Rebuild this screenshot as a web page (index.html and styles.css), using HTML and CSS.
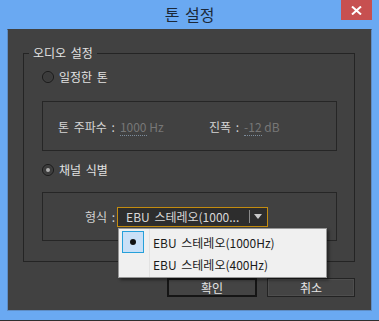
FILE: index.html
```html
<html>

<head>
    <meta charset="utf-8">
    <link rel="stylesheet" href="styles.css">
</head>

<body>
    <div class="window">
        <div class="titlebar">
            <span class="title">톤 설정</span>
            <div class="close">
                <svg width="11" height="9" viewBox="0 0 11 9">
                    <path d="M1 0.5 L10 8.5 M10 0.5 L1 8.5" stroke="#fff" stroke-width="2" fill="none" />
                </svg>
            </div>
        </div>
        <div class="client">
            <div class="group">
                <span class="legend">오디오 설정</span>
                <div class="radio-row"><span class="radio"></span>일정한 톤</div>
                <div class="subbox">
                    <div class="field field-freq">
                        <span class="label">톤 주파수 :</span>
                        <span class="value"><span class="num">1000</span> Hz</span>
                    </div>
                    <div class="field">
                        <span class="label">진폭 :</span>
                        <span class="value"><span class="num">-12</span> dB</span>
                    </div>
                </div>
                <div class="radio-row"><span class="radio checked"></span>채널 식별</div>
                <div class="subbox format">
                    <span class="label">형식 :</span>
                    <div class="dropdown">
                        <span class="dd-text">EBU 스테레오(1000...</span>
                        <span class="dd-sep"></span>
                        <span class="dd-arrow"></span>
                    </div>
                </div>
            </div>
            <div class="buttons">
                <div class="btn default">확인</div>
                <div class="btn">취소</div>
            </div>
            <div class="popup">
                <div class="menu-item">
                    <span class="check"><span class="bullet"></span></span>
                    <span class="item-text">EBU 스테레오(1000Hz)</span>
                </div>
                <div class="menu-item">
                    <span class="check empty"></span>
                    <span class="item-text">EBU 스테레오(400Hz)</span>
                </div>
            </div>
        </div>
    </div>
</body>

</html>
```

FILE: styles.css
```css
body {
    margin: 0;
    background: #2f2f2f;
    font-family: "Noto Sans CJK KR", "Noto Sans", sans-serif;
    font-size: 12px;
    word-spacing: 2px;
}

.window {
    width: 379px;
    height: 320px;
    background: #6aa9f2;
    position: relative;
}

.titlebar {
    height: 29px;
    display: flex;
    justify-content: center;
    align-items: center;
}

.title {
    font-size: 16px;
    color: #1b2838;
    margin-top: -1px;
}

.close {
    position: absolute;
    top: 0;
    left: 341px;
    width: 31px;
    height: 20px;
    background: #c75050;
    display: flex;
    align-items: center;
    justify-content: center;
}

.client {
    margin: 0 7px;
    height: 282px;
    background: #414141;
    border: 1px solid #5e8cc4;
    border-top: 1px solid #414141;
    padding: 23px 0 0 15px;
    box-sizing: border-box;
    position: relative;
    color: #dcdcdc;
}

.group {
    width: 332px;
    height: 209px;
    border: 1px solid #242424;
    box-sizing: border-box;
    position: relative;
    padding: 15px 0 0 18px;
}

.legend {
    position: absolute;
    top: -9px;
    left: 5px;
    padding: 0 4px;
    background: #414141;
    line-height: 16px;
    color: #e2e2e2;
}

.radio-row {
    display: flex;
    align-items: center;
    height: 16px;
    line-height: 16px;
    color: #e2e2e2;
}

.radio {
    width: 12px;
    height: 12px;
    border: 1px solid #1a1a1a;
    border-radius: 50%;
    box-sizing: border-box;
    background: #3c3c3c;
    box-shadow: inset 0 0 1px #5a5a5a;
    margin-right: 5px;
    display: flex;
    align-items: center;
    justify-content: center;
}

.radio.checked::after {
    content: "";
    width: 4px;
    height: 4px;
    border-radius: 50%;
    background: #b0b0b0;
}

.subbox {
    width: 295px;
    height: 50px;
    border: 1px solid #262626;
    box-sizing: border-box;
    display: flex;
    align-items: center;
    padding-left: 15px;
    margin: 16px 0 11px 0;
}

.subbox.format {
    height: 49px;
    margin: 14px 0 0 0;
    padding-left: 42px;
}

.field {
    display: flex;
    align-items: center;
}

.field-freq {
    width: 151px;
}

.label {
    color: #d4d4d4;
    margin-right: 5px;
}

.format .label {
    margin-right: 2px;
}

.value {
    color: #777;
    word-spacing: 0;
}

.num {
    border-bottom: 1px dotted #7c8c9c;
}

.dropdown {
    width: 151px;
    height: 20px;
    border: 1px solid #c38c10;
    box-sizing: border-box;
    background: #2d2d2d;
    display: flex;
    align-items: center;
    padding-left: 8px;
}

.dd-text {
    flex: 1;
    color: #d8d8d8;
    white-space: nowrap;
    overflow: hidden;
}

.dd-sep {
    width: 1px;
    height: 13px;
    background: #8a8a8a;
    margin: 0 4px 0 2px;
}

.dd-arrow {
    width: 0;
    height: 0;
    border-left: 4px solid transparent;
    border-right: 4px solid transparent;
    border-top: 5px solid #c8c8c8;
    margin-right: 5px;
}

.buttons {
    width: 332px;
    display: flex;
    justify-content: flex-end;
    gap: 10px;
    margin-top: 16px;
}

.btn {
    width: 88px;
    height: 19px;
    box-sizing: border-box;
    border: 1px solid #232323;
    box-shadow: inset 0 0 0 1px #4e4e4e;
    background: #444;
    display: flex;
    align-items: center;
    justify-content: center;
    color: #e4e4e4;
    line-height: 16px;
}

.btn.default {
    width: 90px;
    border: 2px solid #151515;
    box-shadow: none;
}

.popup {
    position: absolute;
    left: 110px;
    top: 198px;
    width: 209px;
    height: 50px;
    box-sizing: border-box;
    background: #f0f0f0;
    border: 1px solid #979797;
    box-shadow: 2px 2px 3px rgba(0, 0, 0, 0.45);
    padding: 2px 0 0 3px;
    color: #1a1a1a;
    background-image: linear-gradient(#e2e2e2, #e2e2e2);
    background-size: 1px 100%;
    background-position: 30px 0;
    background-repeat: no-repeat;
}

.menu-item {
    display: flex;
    align-items: center;
    height: 22px;
}

.check {
    width: 22px;
    height: 22px;
    box-sizing: border-box;
    border: 1px solid #26a0da;
    background: #c9e0f7;
    display: flex;
    align-items: center;
    justify-content: center;
    margin-right: 9px;
}

.check.empty {
    border: none;
    background: none;
}

.bullet {
    width: 6px;
    height: 6px;
    border-radius: 50%;
    background: #111;
}

.item-text {
    white-space: nowrap;
}
```
